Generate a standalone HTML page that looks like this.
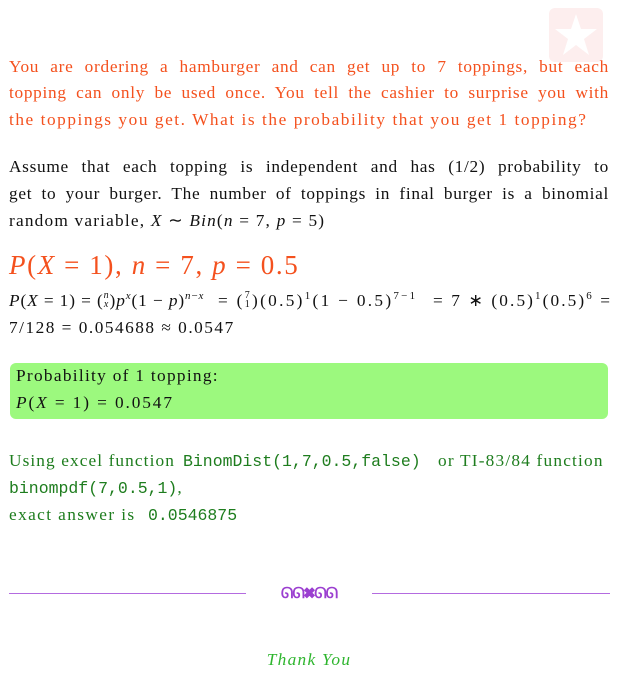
<!DOCTYPE html>
<html><head><style>
body{margin:0;width:618px;height:675px;background:#fff;position:relative;overflow:hidden;font-family:"Liberation Serif",serif;font-size:17.3px;}
.l{position:absolute;left:9px;width:600px;white-space:nowrap;line-height:20px;letter-spacing:0.7px;}
.a{position:absolute;white-space:nowrap;line-height:20px;letter-spacing:0.6px}
.j{text-align:justify;text-align-last:justify;}
.o{color:#f4511e}
.g{color:#1e7d1e}
.k{color:#111}
i{font-style:italic}
tt{font-family:"Liberation Mono",monospace;font-size:16.5px;letter-spacing:0}
sup{font-size:11px;line-height:0}
.b{display:inline-flex;flex-direction:column;font-size:10px;line-height:9px;vertical-align:middle;text-align:center;position:relative;top:-2px}
</style></head><body>
<div style="position:absolute;left:549px;top:8px;width:54px;height:54px;background:#fdeeee;border-radius:6px">
<svg width="54" height="54" viewBox="0 0 54 54"><polygon points="27,6 32,21 48,21 35,31 40,47 27,37 14,47 19,31 6,21 22,21" fill="#fff"/></svg></div>
<div class="l j o" style="top:57px">You are ordering a hamburger and can get up to 7 toppings, but each</div>
<div class="l j o" style="top:83px">topping can only be used once. You tell the cashier to surprise you with</div>
<div class="l o" style="top:110px;letter-spacing:1.55px">the toppings you get. What is the probability that you get 1 topping?</div>
<div class="l j k" style="top:157px">Assume that each topping is independent and has (1/2) probability to</div>
<div class="l j k" style="top:184px">get to your burger. The number of toppings in final burger is a binomial</div>
<div class="l k" style="top:211px;letter-spacing:1.2px">random variable, <i>X</i> ∼ <i>Bin</i>(<i>n</i> = 7, <i>p</i> = 5)</div>
<div class="l o" style="top:250px;font-size:27px;line-height:30px;letter-spacing:1.6px"><i>P</i>(<i>X</i> = 1), <i>n</i> = 7, <i>p</i> = 0.5</div>
<div class="a k" style="top:291px;left:9px;letter-spacing:0.9px"><i>P</i>(<i>X</i> = 1) = (<span class="b"><i>n</i><i>x</i></span>)<i>p</i><sup><i>x</i></sup>(1 − <i>p</i>)<sup><i>n</i>−<i>x</i></sup></div>
<div class="a k" style="top:291px;left:218px;letter-spacing:2.3px">= (<span class="b"><span>7</span><span>1</span></span>)(0.5)<sup>1</sup>(1 − 0.5)<sup>7−1</sup></div>
<div class="a k" style="top:291px;left:433px;letter-spacing:2.1px">= 7 ∗ (0.5)<sup>1</sup>(0.5)<sup>6</sup> =</div>
<div class="l k" style="top:318px;letter-spacing:1.5px">7/128 = 0.054688 ≈ 0.0547</div>
<div style="position:absolute;left:10px;top:363px;width:598px;height:56px;background:#9cf97e;border-radius:6px"></div>
<div class="l k" style="top:366px;left:16px;letter-spacing:1.3px">Probability of 1 topping:</div>
<div class="l k" style="top:393px;left:16px;letter-spacing:1.9px"><i>P</i>(<i>X</i> = 1) = 0.0547</div>
<div class="a g" style="top:451px;left:9px;letter-spacing:1.1px">Using excel function</div>
<div class="a g" style="top:451px;left:183px"><tt>BinomDist(1,7,0.5,false)</tt></div>
<div class="a g" style="top:451px;left:438px;letter-spacing:1.2px">or TI-83/84 function</div>
<div class="a g" style="top:478px;left:9px"><tt>binompdf(7,0.5,1)</tt>,</div>
<div class="a g" style="top:505px;left:9px;letter-spacing:1.4px">exact answer is</div>
<div class="a g" style="top:505px;left:148px"><tt>0.0546875</tt></div>
<div style="position:absolute;left:9px;top:593px;width:237px;height:1px;background:#b46be0"></div>
<div style="position:absolute;left:372px;top:593px;width:238px;height:1px;background:#b46be0"></div>
<div style="position:absolute;left:266px;top:584px;width:86px;height:20px;color:#9b3fd0;font-size:15px;font-weight:bold;line-height:20px;text-align:center;letter-spacing:-1px">ᘏᘏ✖ᘏᘏ</div>
<div style="position:absolute;left:0;width:618px;top:650px;text-align:center;color:#2eb52e;font-style:italic;line-height:20px;letter-spacing:1.3px">Thank You</div>
</body></html>
